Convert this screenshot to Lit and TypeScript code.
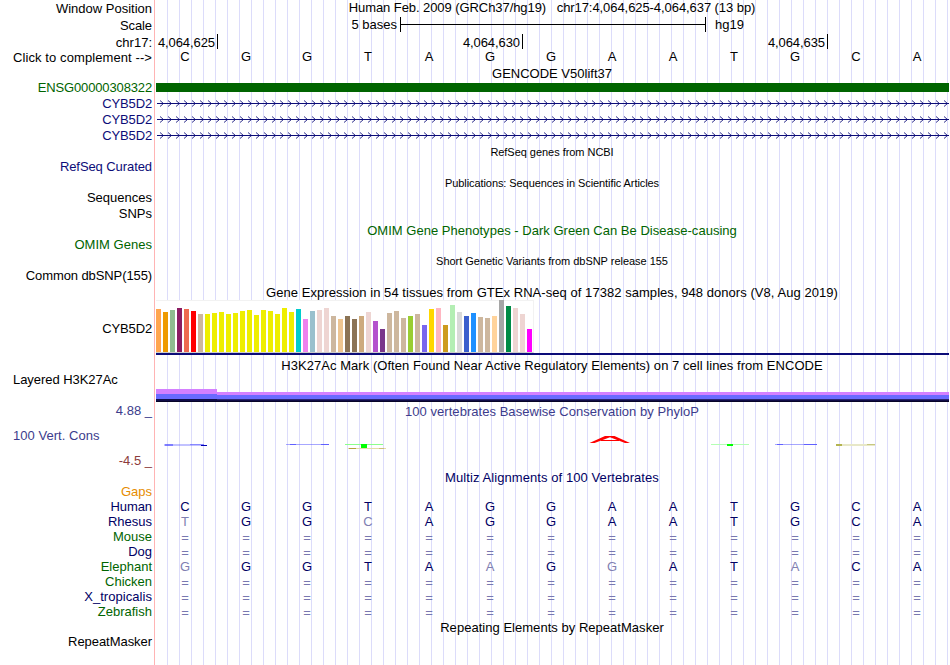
import { LitElement, html, svg, css } from 'lit'
import { customElement } from 'lit/decorators.js'
import { styleMap } from 'lit/directives/style-map.js'

// [text, baseline, class, letter spacing]
const labels: [string, number, string, number][] = [
  ['Window Position', 13, '', 0],
  ['Scale', 30, '', -0.1],
  ['chr17:', 47, '', 0],
  ['Click to complement -->', 62, '', 0.09],
  ['ENSG00000308322', 92, 'green', -0.14],
  ['CYB5D2', 108, 'navy', -0.15],
  ['CYB5D2', 124, 'navy', -0.15],
  ['CYB5D2', 140, 'navy', -0.15],
  ['RefSeq Curated', 171, 'navy', -0.08],
  ['Sequences', 202, '', 0],
  ['SNPs', 218, '', 0],
  ['OMIM Genes', 249, 'green', 0.03],
  ['Common dbSNP(155)', 280, '', -0.1],
  ['CYB5D2', 333, '', -0.15],
  ['Layered H3K27Ac', 384, 'left', -0.05],
  ['4.88 _', 415, 'cons', 0],
  ['100 Vert. Cons', 440, 'cons left', 0.04],
  ['-4.5 _', 465, 'neg', 0],
  ['Gaps', 496, 'gaps', 0],
  ['Human', 511, 'dark', -0.1],
  ['Rhesus', 526, 'dark', 0],
  ['Mouse', 541, 'green', 0],
  ['Dog', 556, 'dark', 0],
  ['Elephant', 571, 'green', 0],
  ['Chicken', 586, 'green', 0],
  ['X_tropicalis', 601, 'dark', 0.05],
  ['Zebrafish', 616, 'green', 0],
  ['RepeatMasker', 646, '', -0.05]
]

const reference = 'CGGTAGGAATGCA'

// lower case marks a mismatch against the human row
const alignment = [
  'CGGTAGGAATGCA',
  'tGGcAGGAATGCA',
  '=============',
  '=============',
  'gGGTAaGgATaCA',
  '=============',
  '=============',
  '============='
]

const tissues: [string, number][] = [
  ['#ffa54f', 43], ['#ee9a00', 40], ['#8fbc8f', 42], ['#8b1c62', 44], ['#ee6a50', 43],
  ['#ff0000', 41], ['#cdb79e', 38], ['#eeee00', 38], ['#eeee00', 39], ['#eeee00', 40],
  ['#eeee00', 38], ['#eeee00', 39], ['#eeee00', 41], ['#eeee00', 42], ['#eeee00', 37],
  ['#eeee00', 42], ['#eeee00', 41], ['#eeee00', 38], ['#eeee00', 44], ['#eeee00', 40],
  ['#00cdcd', 43], ['#ee82ee', 33], ['#9ac0cd', 41], ['#eed5d2', 42], ['#eed5d2', 44],
  ['#cdb79e', 36], ['#eec591', 33], ['#8b7355', 36], ['#8b7355', 33], ['#cdaa7d', 36],
  ['#eed5d2', 40], ['#b452cd', 31], ['#7a378b', 23], ['#cdb79e', 39], ['#cdb79e', 41],
  ['#cdb79e', 34], ['#9acd32', 36], ['#cdb79e', 38], ['#7a67ee', 27], ['#ffd700', 43],
  ['#ffb6c1', 44], ['#cd9b1d', 27], ['#b4eeb4', 47], ['#d9d9d9', 40], ['#3a5fcd', 36],
  ['#1e90ff', 39], ['#cdb79e', 35], ['#cdb79e', 34], ['#ffd39b', 36], ['#a6a6a6', 52],
  ['#008b45', 46], ['#eed5d2', 44], ['#eed5d2', 38], ['#ff00ff', 23]
]

@customElement('track-labels')
export class TrackLabels extends LitElement {
  static styles = css`
    :host {
      display: flex;
      flex-direction: column;
      padding-right: 2px;
      white-space: pre;
    }
    div {
      display: flex;
      align-items: flex-end;
      justify-content: flex-end;
      line-height: 15px;
      flex: none;
    }
    .left {
      justify-content: flex-start;
      padding-left: 13px;
    }
    .green { color: #006400; }
    .navy { color: #0c0c78; }
    .cons { color: #3c3c8c; }
    .neg { color: #8c3c3c; }
    .gaps { color: #e68c00; }
    .dark { color: #000064; }
  `

  render () {
    return labels.map(([text, y, cls, spacing], i) => {
      const height = i ? y - labels[i - 1][1] : y + 3
      const style = { height: `${height}px`, letterSpacing: `${spacing}px` }
      return html`<div class=${cls} style=${styleMap(style)}>${text}</div>`
    })
  }
}

@customElement('base-row')
export class BaseRow extends LitElement {
  static properties = { bases: { type: String } }
  declare bases: string

  static styles = css`
    :host {
      display: grid;
      grid-template-columns: repeat(13, 61px);
      margin-left: -0.5px;
      height: 15px;
      line-height: 15px;
      text-align: center;
    }
    .miss { color: #8080b2; }
    .gap {
      color: #7878b0;
      padding-top: 1px;
    }
  `

  render () {
    return [...this.bases].map(b => {
      const cls = b === '=' ? 'gap' : b === b.toLowerCase() ? 'miss' : ''
      return html`<span class=${cls}>${b.toUpperCase()}</span>`
    })
  }
}

@customElement('app-root')
export class AppRoot extends LitElement {
  static styles = css`
    :host {
      display: grid;
      grid-template-columns: 154px 795px;
      width: 950px;
      height: 665px;
      overflow: hidden;
      background: #fff;
      color: #000;
      font: 13px/15px 'Liberation Sans', Arial, sans-serif;
    }
    .tracks {
      display: flex;
      flex-direction: column;
      border-left: 1px solid #ffb4b4;
      background: repeating-linear-gradient(90deg, transparent 0 11px, #dcdcfa 11px 12px) 1px 0 no-repeat;
    }
    .tracks > * { flex: none; }
    .title {
      text-align: center;
      white-space: pre;
      height: 15px;
    }
    .small { font-size: 11px; }
    .position { letter-spacing: -0.07px; }
    .gencode { margin-top: 2px; }
    .refseq {
      margin-top: 2px;
      letter-spacing: -0.04px;
    }
    .pubs {
      margin-top: 16px;
      letter-spacing: -0.08px;
    }
    .omim {
      margin-top: 32px;
      color: #006400;
      letter-spacing: 0.02px;
    }
    .dbsnp, .gtex { margin-top: 16px; }
    .dbsnp { letter-spacing: -0.03px; }
    .gtex { letter-spacing: 0.05px; }
    .h3k {
      margin-top: 3px;
      letter-spacing: 0.045px;
    }
    .phylop {
      margin-top: 2px;
      color: #3c3c8c;
      letter-spacing: 0.04px;
    }
    .multiz {
      color: #000064;
      letter-spacing: 0.08px;
    }
    .repeats {
      margin-top: 1px;
      letter-spacing: 0.03px;
    }
    svg { display: block; }
    .scale {
      display: flex;
      height: 16px;
      padding-top: 2px;
    }
    .scale .length {
      width: 242px;
      margin-right: 3px;
      text-align: right;
    }
    .scale .assembly { margin-left: 9px; }
    .coords {
      display: flex;
      height: 15px;
      padding-top: 1px;
      letter-spacing: -0.08px;
    }
    .coord {
      box-sizing: border-box;
      width: 305px;
      height: 15px;
      padding-right: 2px;
      border-right: 1px solid #000;
      line-height: 17px;
      text-align: right;
    }
    .coord:first-child { width: 63px; }
    .gene {
      height: 9px;
      margin: 2px 0 3px 1px;
      background: #006400;
    }
    .panel {
      box-sizing: border-box;
      display: flex;
      align-items: flex-end;
      gap: 2px;
      width: 378px;
      height: 53px;
      margin-left: 1px;
      background: #fff;
      border: 1px solid #f2f2f2;
      border-left: 0;
      border-bottom-color: #ccc;
    }
    .bar {
      width: 5px;
      flex: none;
    }
    .baseline {
      height: 2px;
      margin-left: 1px;
      background: #0c0c78;
    }
    .signal { margin-top: 16px; }
    .alignment {
      padding-top: 14px;
      color: #000064;
    }
  `

  scaleBar () {
    return html`
      <div class="scale">
        <span class="length">5 bases</span>
        <svg width="306" height="15" shape-rendering="crispEdges">
          <path d="M0 0h1v7h304v-7h1v15h-1v-7h-304v7h-1z" />
        </svg>
        <span class="assembly">hg19</span>
      </div>
      <div class="coords">
        ${['4,064,625', '4,064,630', '4,064,635'].map(c => html`<div class="coord">${c}</div>`)}
      </div>
    `
  }

  intron () {
    const arrows = Array.from({ length: 99 }, (_, i) => i * 8 + 5)
    return html`
      <svg width="794" height="16">
        <rect x="2" y="8" width="792" height="1" fill="#0c0c78" />
        ${arrows.map(x => svg`
          <path d="M${x} 5.500l3.500 3l-3.500 3" fill="none" stroke="#0c0c78" stroke-opacity=".85" />
        `)}
      </svg>
    `
  }

  expression () {
    return html`
      <div class="panel">
        ${tissues.map(([background, h]) => html`
          <div class="bar" style=${styleMap({ background, height: `${h}px` })}></div>
        `)}
      </div>
      <div class="baseline"></div>
    `
  }

  signal () {
    return html`
      <svg class="signal" width="794" height="13" shape-rendering="crispEdges">
        <path d="M1 0h61v3h732v3h-732h-61z" fill="#d480ff" />
        <path d="M1 5h61v1h732v4h-793z" fill="#6a6aff" />
        <rect x="1" y="10" width="793" height="3" fill="#100c48" />
        <rect x="62" y="10" width="732" height="1" fill="#2c2470" />
        <rect x="1" y="12" width="793" height="1" fill="#080428" />
      </svg>
    `
  }

  phylop () {
    return html`
      <svg width="794" height="51" viewBox="155 419 794 51">
        <g fill="#5050ff">
          <rect x="164" y="444" width="40" height="2" opacity=".35" />
          <rect x="165" y="444" width="8" height="2" opacity=".6" />
          <rect x="190" y="444" width="14" height="1" opacity=".5" />
          <rect x="201" y="445" width="6" height="1" fill="#0000b4" />
          <rect x="286" y="444" width="43" height="1" opacity=".5" />
          <rect x="290" y="444" width="6" height="1" opacity=".8" />
          <rect x="321" y="444" width="8" height="1" opacity=".8" />
          <rect x="775" y="444" width="42" height="1" opacity=".5" />
          <rect x="777" y="444" width="6" height="1" opacity=".8" />
          <rect x="804" y="444" width="13" height="1" opacity=".8" />
        </g>
        <rect x="345" y="444" width="38" height="1" fill="#8cff8c" />
        <rect x="361" y="444" width="6" height="4" fill="#0f0" />
        <rect x="348" y="448" width="38" height="1" fill="#e4dca8" />
        <rect x="349" y="448" width="7" height="1" fill="#b4a03c" />
        <rect x="379" y="448" width="5" height="1" fill="#cdbe78" />
        <path d="M589.5 443L605 436h9.500L630 443h-5L610 437.200L594.500 443zM601 440h18v1h-18z" fill="#f00" />
        <rect x="711" y="444" width="38" height="1" fill="#b4ffb4" />
        <rect x="727" y="444" width="6" height="2" fill="#0f0" />
        <rect x="836" y="444" width="39" height="2" fill="#e8e8c8" />
        <rect x="836" y="444" width="6" height="2" fill="#b4b450" />
        <rect x="867" y="444" width="8" height="1" fill="#c8c880" />
      </svg>
    `
  }

  render () {
    return html`
      <track-labels></track-labels>
      <div class="tracks">
        <div class="title position">Human Feb. 2009 (GRCh37/hg19)   chr17:4,064,625-4,064,637 (13 bp)</div>
        ${this.scaleBar()}
        <base-row bases=${reference}></base-row>
        <div class="title gencode">GENCODE V50lift37</div>
        <div class="gene"></div>
        ${this.intron()}${this.intron()}${this.intron()}
        <div class="title small refseq">RefSeq genes from NCBI</div>
        <div class="title small pubs">Publications: Sequences in Scientific Articles</div>
        <div class="title omim">OMIM Gene Phenotypes - Dark Green Can Be Disease-causing</div>
        <div class="title small dbsnp">Short Genetic Variants from dbSNP release 155</div>
        <div class="title gtex">Gene Expression in 54 tissues from GTEx RNA-seq of 17382 samples, 948 donors (V8, Aug 2019)</div>
        ${this.expression()}
        <div class="title h3k">H3K27Ac Mark (Often Found Near Active Regulatory Elements) on 7 cell lines from ENCODE</div>
        ${this.signal()}
        <div class="title phylop">100 vertebrates Basewise Conservation by PhyloP</div>
        ${this.phylop()}
        <div class="title multiz">Multiz Alignments of 100 Vertebrates</div>
        <div class="alignment">
          ${alignment.map(bases => html`<base-row bases=${bases}></base-row>`)}
        </div>
        <div class="title repeats">Repeating Elements by RepeatMasker</div>
      </div>
    `
  }
}
